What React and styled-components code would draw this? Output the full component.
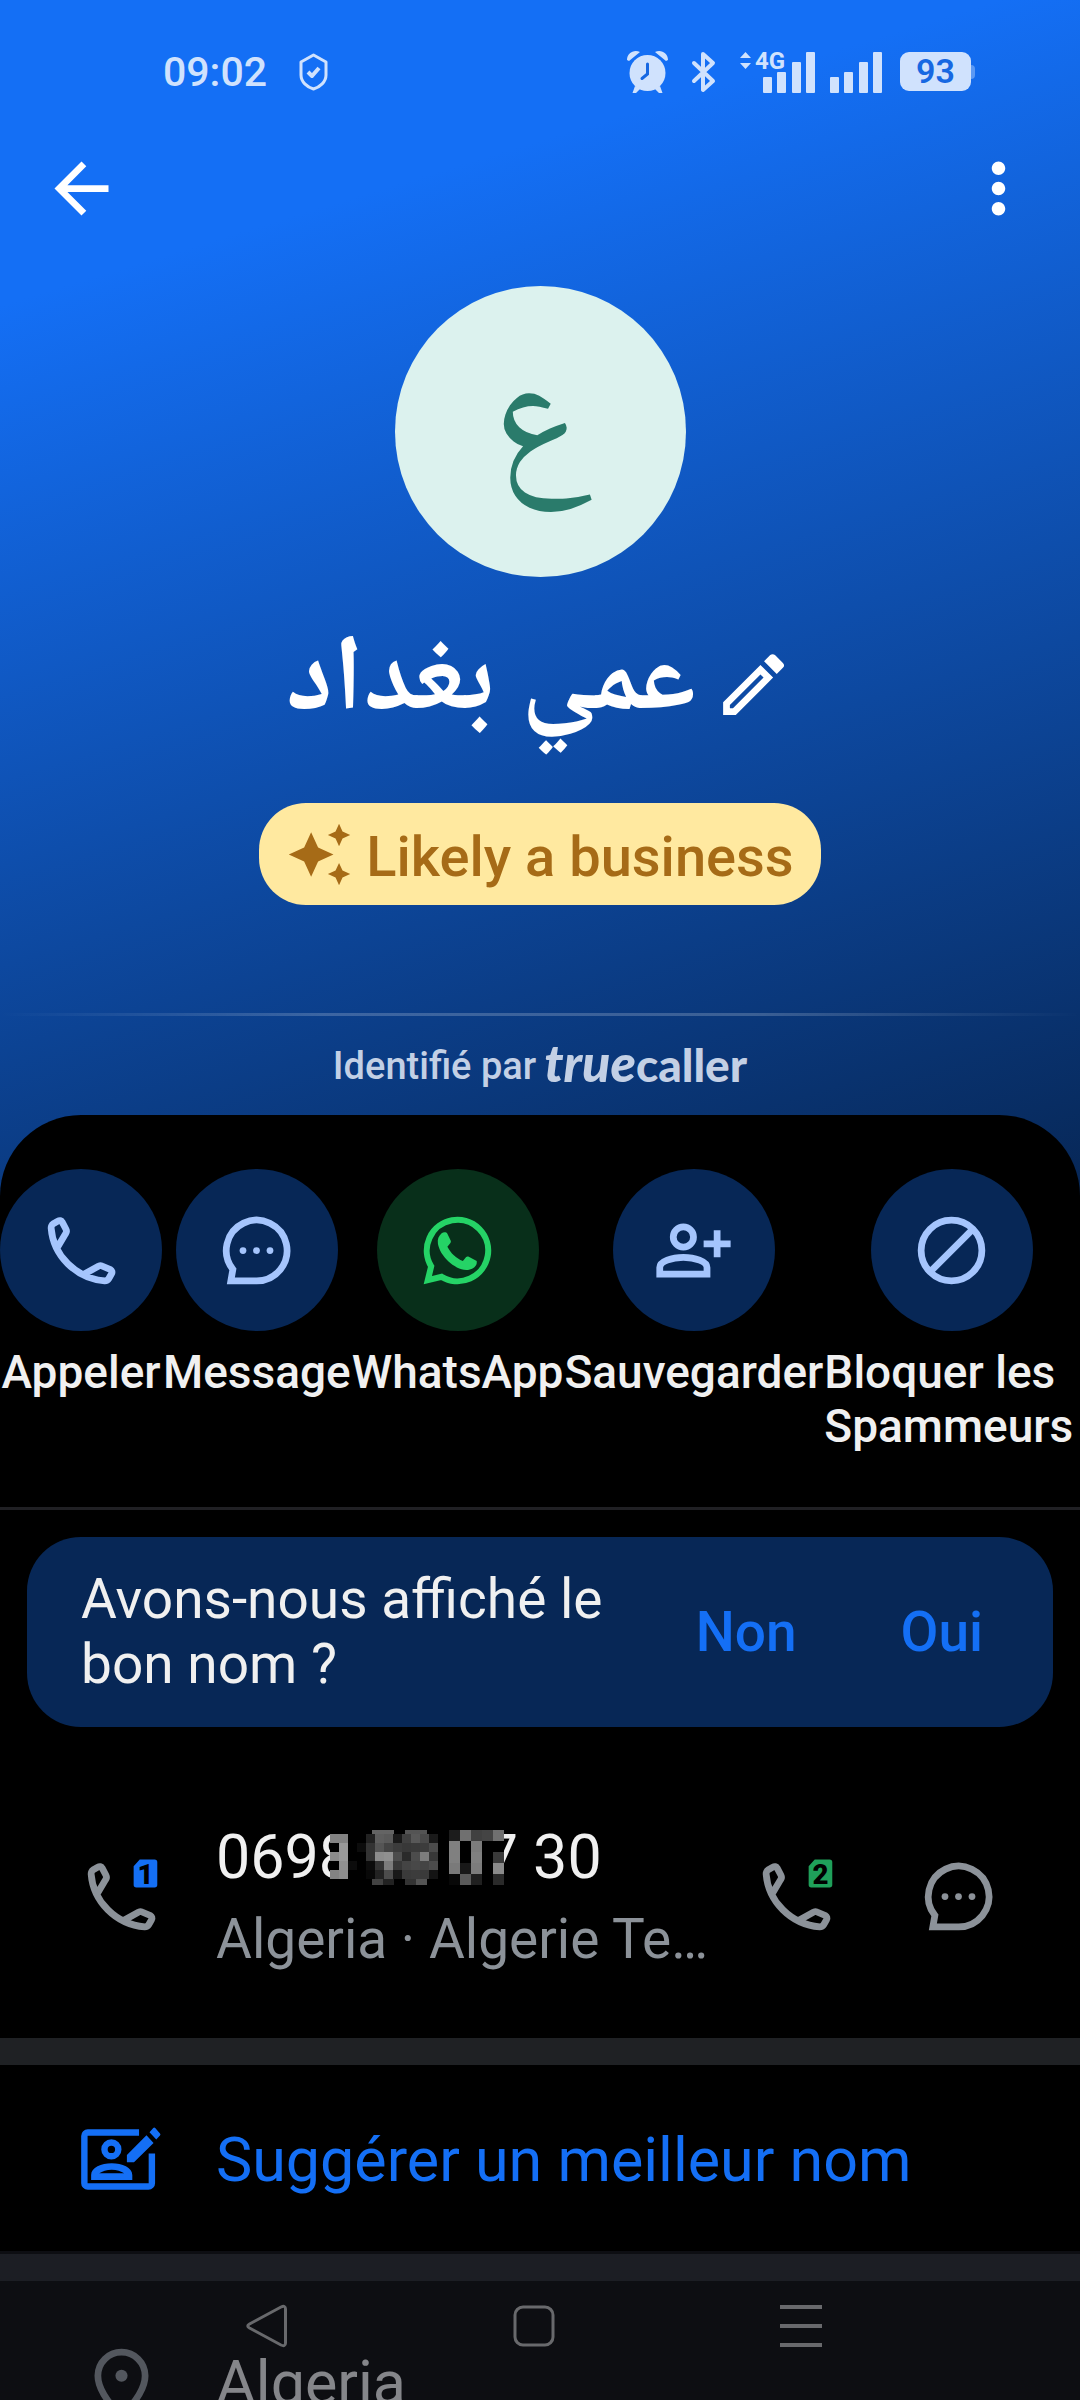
import React from "react"
import styled, { createGlobalStyle } from "styled-components"
import {
  MdArrowBack,
  MdAutoAwesome,
  MdMoreVert,
  MdOutlineEdit,
} from "react-icons/md"

const blue = "#146ff5"
const navy = "#072756"
const lightBlue = "#a5c5fd"
const grey = "#8c9299"
const white = "#f0f0f0"
const status = "#d0e2fd"

const GlobalStyle = createGlobalStyle`
  * {
    box-sizing: border-box;
  }
  body {
    margin: 0;
    background: #000;
    font-family: Roboto, "Noto Naskh Arabic", "Noto Sans Arabic", "DejaVu Sans", sans-serif;
  }
  h1, p {
    margin: 0;
    font-weight: 400;
  }
  button {
    margin: 0;
    padding: 0;
    border: 0;
    background: none;
    color: inherit;
    font: inherit;
    cursor: pointer;
  }
  svg {
    display: block;
    flex-shrink: 0;
    overflow: visible;
  }
`

const Screen = styled.div`
  height: 100vh;
  overflow-y: auto;
  scrollbar-width: none;
  background: #000;
`

const Header = styled.header`
  display: flex;
  flex-direction: column;
  align-items: center;
  padding-bottom: 81px;
  background: linear-gradient(163deg, ${blue} 20%, ${navy} 100%);
  color: #fff;
`

const StatusBar = styled.div`
  align-self: stretch;
  display: flex;
  justify-content: space-between;
  height: 94px;
  padding: 49px 105px 0 163px;
  color: ${status};
`

const StatusGroup = styled.div`
  display: flex;
  align-items: center;
  gap: ${(props) => props.$gap}px;
`

const Time = styled.time`
  font-size: 41px;
  font-weight: 500;
`

const Battery = styled.div`
  display: flex;
  align-items: center;
`

const BatteryBody = styled.span`
  width: 71px;
  height: 39px;
  border-radius: 9px;
  background: ${status};
  color: #1768e2;
  font-size: 34px;
  font-weight: 600;
  line-height: 39px;
  text-align: center;
`

const BatteryTip = styled.span`
  width: 4px;
  height: 14px;
  border-radius: 0 4px 4px 0;
  background: #5b99f4;
`

const Toolbar = styled.nav`
  align-self: stretch;
  display: flex;
  align-items: center;
  justify-content: space-between;
  height: 189px;
  padding: 0 41px;
`

const Avatar = styled.div`
  display: flex;
  align-items: center;
  justify-content: center;
  width: 291px;
  height: 291px;
  margin-top: 3px;
  padding-bottom: 38px;
  border-radius: 50%;
  background: #dcf2ee;
  color: #2a7b6b;
  font-size: 158px;
  line-height: 160px;
`

const NameRow = styled.div`
  display: flex;
  align-items: center;
  gap: 17px;
  height: 100px;
  margin: 57px 0 69px;
`

const Name = styled.h1`
  align-self: flex-start;
  font-size: 108px;
  font-weight: 700;
  line-height: 76px;
  white-space: nowrap;
`

const Badge = styled.div`
  display: flex;
  align-items: center;
  gap: 13px;
  height: 102px;
  padding: 0 27px;
  border-radius: 47px;
  background: #ffe9a0;
  color: #a66b17;
  font-size: 56px;
  font-weight: 500;
`

const BadgeLabel = styled.span`
  padding-top: 6px;
`

const FadeLine = styled.div`
  align-self: stretch;
  height: 3px;
  margin-top: 108px;
  background: linear-gradient(
    90deg,
    transparent,
    rgba(255, 255, 255, 0.2) 30%,
    rgba(255, 255, 255, 0.2) 70%,
    transparent
  );
`

const Identified = styled.p`
  display: flex;
  align-items: center;
  gap: 8px;
  height: 99px;
  color: #c3d0e5;
  font-size: 38px;
  font-weight: 500;
`

const Wordmark = styled.span`
  padding-bottom: 4px;
  font-family: Lato, sans-serif;
  font-size: 46px;
  font-weight: 900;
  line-height: 54px;
  i {
    font-size: 52px;
  }
`

const Sheet = styled.main`
  position: relative;
  margin-top: -81px;
  border-radius: 81px 81px 0 0;
  background: #000;
  color: ${white};
`

const Actions = styled.div`
  display: flex;
  align-items: flex-start;
  padding: 54px 0;
  border-bottom: 3px solid #202024;
`

const Action = styled.button`
  display: flex;
  flex-direction: column;
  align-items: center;
  gap: 14px;
  flex-grow: ${(props) => (props.$grow ? 1 : 0)};
  padding-right: 1px;
  font-size: 46px;
  font-weight: 500;
  line-height: 54px;
  text-align: left;
`

const Circle = styled.span`
  display: flex;
  align-items: center;
  justify-content: center;
  width: 162px;
  height: 162px;
  border-radius: 50%;
  background: ${(props) => (props.$green ? "#082f1a" : navy)};
  color: ${(props) => (props.$green ? "#25d366" : lightBlue)};
`

const ActionLabel = styled.span`
  align-self: ${(props) => (props.$start ? "flex-start" : "center")};
  white-space: pre-line;
`

const Question = styled.section`
  display: flex;
  align-items: center;
  gap: 82px;
  margin: 27px;
  padding: 30px 70px 30px 54px;
  border-radius: 54px;
  background: ${navy};
  font-size: 55px;
  line-height: 65px;
`

const QuestionText = styled.p`
  flex: 1;
`

const Answer = styled.button`
  color: ${blue};
  font-weight: 500;
  & + & {
    margin-left: 22px;
  }
`

const PhoneRow = styled.section`
  display: flex;
  align-items: center;
  padding: 67px 81px;
  color: ${grey};
`

const PhoneText = styled.div`
  flex: 1;
  min-width: 0;
  margin: 0 46px 0 54px;
`

const PhoneNumber = styled.p`
  position: relative;
  color: ${white};
  font-size: 61px;
  line-height: 72px;
  white-space: nowrap;
`

const HiddenDigits = styled.span`
  display: inline-block;
  width: 66px;
`

const MosaicSvg = styled.svg`
  position: absolute;
  left: 114px;
  top: 9px;
`

const Carrier = styled.p`
  margin-top: 14px;
  overflow: hidden;
  font-size: 55px;
  line-height: 64px;
  text-overflow: ellipsis;
  white-space: nowrap;
`

const RowButtons = styled.div`
  display: flex;
  gap: 81px;
`

const Band = styled.div`
  height: 27px;
  background: #1f2124;
`

const SuggestRow = styled.button`
  display: flex;
  align-items: center;
  gap: 54px;
  width: 100%;
  height: 189px;
  padding: 0 81px;
  color: ${blue};
  font-size: 61px;
  line-height: 72px;
  text-align: left;
`

const PlaceRow = styled.section`
  display: flex;
  align-items: center;
  gap: 54px;
  padding: 61px 81px 160px;
  font-size: 61px;
  line-height: 72px;
  svg {
    color: ${grey};
  }
`

const NavBar = styled.nav`
  position: fixed;
  left: 0;
  right: 0;
  bottom: 0;
  display: flex;
  align-items: center;
  justify-content: center;
  gap: 189px;
  height: 149px;
  padding-right: 12px;
  background: rgba(26, 28, 36, 0.5);
  color: #68696c;
`

const NavButton = styled.button`
  padding: 18px;
`

const Icon = ({ children, width = 2 }) => (
  <svg
    width="81"
    height="81"
    viewBox="0 0 24 24"
    fill="none"
    stroke="currentColor"
    strokeWidth={width}
  >
    {children}
  </svg>
)

const PhoneIcon = ({ sim, simColor }) => (
  <Icon>
    <path d="M12.6 19.1 16.9 16.7C17.3 16.4 17.7 16.4 18.1 16.6L20.5 17.6C21 17.9 21.2 18.4 20.9 18.9L20.1 20.3C19.8 20.8 19.4 21 18.9 21C10.3 20.3 3.6 13.4 3 5.3C3 4.8 3.2 4.4 3.6 4.1L5 3.3C5.5 3 6 3.1 6.3 3.6L7.4 5.7C7.6 6.1 7.6 6.6 7.3 7L4.8 11.2" />
    {sim && (
      <g stroke="none">
        <path
          fill={simColor}
          d="M17.4 1H21.8a.8.8 0 0 1 .8.8v6.7a.8.8 0 0 1-.8.8h-5.4a.8.8 0 0 1-.8-.8V3z"
        />
        <text
          x="19.1"
          y="8.2"
          fill="#000"
          fontSize="8.2"
          fontWeight="900"
          textAnchor="middle"
        >
          {sim}
        </text>
      </g>
    )}
  </Icon>
)

const ChatIcon = () => (
  <Icon>
    <path d="M12 21H4.4L5 17.6A9 9 0 1 1 12 21Z" />
    <g fill="currentColor" stroke="none">
      <circle cx="8" cy="12" r="1" />
      <circle cx="12" cy="12" r="1" />
      <circle cx="16" cy="12" r="1" />
    </g>
  </Icon>
)

const WhatsAppIcon = () => (
  <Icon width={1.8}>
    <path d="M4.2 16.7A9.1 9.1 0 1 1 7.3 19.8L3.2 20.8Z" />
    <path
      fill="currentColor"
      stroke="none"
      d="M7.3 6.9C6.4 7.7 6 8.7 6.2 10C6.8 13.6 11 17.6 14.6 17.8C16 17.8 17.5 17 17.7 15.8V15.1L15.2 13.8C14.9 13.7 14.7 13.8 14.5 14L13.6 15.1C11.6 14.4 10 12.8 9 10.9L9.9 9.8C10 9.6 10.1 9.4 10 9.1L9 7C8.7 6.5 7.8 6.5 7.3 6.9Z"
    />
  </Icon>
)

const SaveIcon = () => (
  <Icon>
    <circle cx="9" cy="8" r="3" />
    <path d="M2 19V17C2 15.2 5.6 14 9 14S16 15.2 16 17V19ZM19 6V14M15 10H23" />
  </Icon>
)

const BlockIcon = () => (
  <Icon>
    <circle cx="12" cy="12" r="9" />
    <path d="M18.4 5.6 5.6 18.4" />
  </Icon>
)

const SuggestIcon = () => (
  <Icon width={1.9}>
    <path d="M17.2 4H2A1 1 0 0 0 1 5V19A1 1 0 0 0 2 20H20A1 1 0 0 0 21 19V10.2" />
    <circle cx="9" cy="9" r="2.05" />
    <g fill="currentColor" stroke="none">
      <path d="M3 18.1V16.6C3 14.3 6 13.1 9.1 13.1S15.2 14.3 15.2 16.6V18.1ZM5.4 16.1H12.8C11.9 15.4 10.6 15 9.1 15S6.3 15.4 5.4 16.1Z" />
      <path d="M19.4 4.8 21.5 7.1 15.7 12.8H13.6V10.7ZM20.3 3.9 21.4 2.7Q21.7 2.4 22 2.7L23.4 4.3Q23.7 4.6 23.4 4.9L22.3 6.1Z" />
    </g>
  </Icon>
)

const PinIcon = () => (
  <Icon>
    <path d="M12 22C9 19 5 14.500 5 10a7 7 0 0 1 14 0c0 4.500-4 9-7 12z" />
    <circle cx="12" cy="10" r="1.8" fill="currentColor" stroke="none" />
  </Icon>
)

const ShieldIcon = () => (
  <svg
    width="29"
    height="38"
    viewBox="0 0 29 38"
    fill="none"
    stroke="currentColor"
    strokeWidth="3"
    strokeLinejoin="round"
  >
    <path d="M14.500 2 27 9V22C27 29 21 34 14.500 36C8 34 2 29 2 22V9Z" />
    <path d="M9 19 13 23 20 15" strokeWidth="4" />
  </svg>
)

const AlarmIcon = () => (
  <svg width="41" height="43" viewBox="0 0 41 43" fill="currentColor">
    <circle cx="20.500" cy="23" r="18" />
    <path d="M0 10C0 3 7 -1 13 2L2 11ZM41 10C41 3 34 -1 28 2L39 11Z" />
    <path d="M8 36 5.500 43H9L14 38ZM33 36 35.500 43H32L27 38Z" />
    <path
      d="M20.500 14V24L15 28.500"
      fill="none"
      stroke="#1768e2"
      strokeWidth="3"
      strokeLinecap="round"
    />
  </svg>
)

const BluetoothIcon = () => (
  <svg
    width="24"
    height="42"
    viewBox="0 0 24 42"
    fill="none"
    stroke="currentColor"
    strokeWidth="4"
    strokeLinecap="round"
    strokeLinejoin="round"
  >
    <path d="M2 12 21 30 11 39V3L21 12 2 30" />
  </svg>
)

const SignalBars = ({ x = 0 }) => (
  <g>
    <rect x={x} y="26" width="9" height="16" rx="1" />
    <rect x={x + 14} y="21" width="9" height="21" rx="1" />
    <rect x={x + 29} y="11" width="9" height="31" rx="1" />
    <rect x={x + 43} y="1" width="9" height="41" rx="1" />
  </g>
)

// 9px cells on the left, 11px cells on the right; each value is a grey level
const smallCells = [
  [131, 131, 0, 0, 34, 94, 90, 26, 64, 88, 74, 26],
  [0, 153, 0, 12, 51, 85, 68, 60, 56, 58, 60, 76],
  [140, 153, 0, 0, 51, 140, 144, 76, 42, 76, 124, 56],
  [0, 144, 12, 0, 12, 51, 124, 56, 68, 72, 68, 76],
  [131, 140, 0, 0, 8, 34, 76, 24, 58, 60, 58, 20],
]

const largeCells = [
  [28, 112, 64, 68, 112],
  [128, 0, 124, 0, 0],
  [128, 0, 128, 0, 58],
  [122, 24, 124, 0, 138],
  [8, 90, 32, 0, 42],
]

const Mosaic = () => {
  const cell = (x, y, w, h, v) => (
    <rect
      key={`${x}-${y}`}
      x={x}
      y={y}
      width={w}
      height={h}
      fill={`rgb(${v}, ${v}, ${v})`}
    />
  )
  return (
    <MosaicSvg width="174" height="55" shapeRendering="crispEdges" aria-hidden>
      <rect width="174" height="55" fill="#000" />
      {cell(42, 0, 22, 4, 100)}
      {cell(75, 0, 22, 4, 84)}
      {smallCells.map((row, j) =>
        row.map((v, i) => cell(i * 9, 4 + j * 9, 9, 9, v))
      )}
      {cell(42, 49, 11, 6, 66)}
      {cell(53, 49, 11, 6, 34)}
      {cell(75, 49, 11, 6, 51)}
      {cell(86, 49, 11, 6, 84)}
      {largeCells.map((row, j) =>
        row.map((v, i) => cell(119 + i * 11, j * 11, 11, 11, v))
      )}
    </MosaicSvg>
  )
}

const actions = [
  { label: "Appeler", icon: <PhoneIcon /> },
  { label: "Message", icon: <ChatIcon /> },
  { label: "WhatsApp", icon: <WhatsAppIcon />, green: true },
  { label: "Sauvegarder", icon: <SaveIcon /> },
  { label: "Bloquer les\nSpammeurs", icon: <BlockIcon />, last: true },
]

const App = () => {
  return (
    <Screen>
      <GlobalStyle />
      <Header>
        <StatusBar>
          <StatusGroup $gap={32}>
            <Time>09:02</Time>
            <ShieldIcon />
          </StatusGroup>
          <StatusGroup $gap={18}>
            <StatusGroup $gap={24}>
              <AlarmIcon />
              <BluetoothIcon />
              <svg
                width="142"
                height="42"
                viewBox="0 0 142 42"
                fill="currentColor"
              >
                <path d="M0 7 5.500 1 11 7ZM0 12 5.500 18 11 12Z" />
                <text x="15" y="18" fontSize="24" fontWeight="700">
                  4G
                </text>
                <SignalBars x={23} />
                <SignalBars x={90} />
              </svg>
            </StatusGroup>
            <Battery>
              <BatteryBody>93</BatteryBody>
              <BatteryTip />
            </Battery>
          </StatusGroup>
        </StatusBar>
        <Toolbar>
          <button aria-label="Retour">
            <MdArrowBack size={81} />
          </button>
          <button aria-label="Plus d'options">
            <MdMoreVert size={81} />
          </button>
        </Toolbar>
        <Avatar lang="ar">ع</Avatar>
        <NameRow>
          <Name lang="ar" dir="rtl">
            عمي بغداد
          </Name>
          <button aria-label="Modifier le nom">
            <MdOutlineEdit size={81} />
          </button>
        </NameRow>
        <Badge>
          <MdAutoAwesome size={67} />
          <BadgeLabel>Likely a business</BadgeLabel>
        </Badge>
        <FadeLine />
        <Identified>
          Identifié par
          <Wordmark>
            <i>true</i>caller
          </Wordmark>
        </Identified>
      </Header>
      <Sheet>
        <Actions>
          {actions.map((action) => (
            <Action key={action.label} $grow={action.last}>
              <Circle $green={action.green}>{action.icon}</Circle>
              <ActionLabel $start={action.last}>{action.label}</ActionLabel>
            </Action>
          ))}
        </Actions>
        <Question>
          <QuestionText>Avons-nous affiché le bon nom ?</QuestionText>
          <Answer>Non</Answer>
          <Answer>Oui</Answer>
        </Question>
        <PhoneRow>
          <button aria-label="Appeler avec la SIM 1">
            <PhoneIcon sim="1" simColor={blue} />
          </button>
          <PhoneText>
            <PhoneNumber>
              0698 <HiddenDigits /> 07 30
              <Mosaic />
            </PhoneNumber>
            <Carrier>Algeria · Algerie Telecom Mobile</Carrier>
          </PhoneText>
          <RowButtons>
            <button aria-label="Appeler avec la SIM 2">
              <PhoneIcon sim="2" simColor="#1fa05a" />
            </button>
            <button aria-label="Envoyer un message">
              <ChatIcon />
            </button>
          </RowButtons>
        </PhoneRow>
        <Band />
        <SuggestRow>
          <SuggestIcon />
          Suggérer un meilleur nom
        </SuggestRow>
        <Band />
        <PlaceRow>
          <PinIcon />
          <p>Algeria</p>
        </PlaceRow>
      </Sheet>
      <NavBar>
        <NavButton aria-label="Précédent">
          <svg width="42" height="42" viewBox="0 0 42 42" fill="none" stroke="currentColor" strokeWidth="3">
            <path d="M3.500 19 35 2Q39.500 0 39.500 4V38Q39.500 42 35 40L3.500 23Q0 21 3.500 19Z" />
          </svg>
        </NavButton>
        <NavButton aria-label="Accueil">
          <svg width="42" height="42" viewBox="0 0 42 42" fill="none" stroke="currentColor" strokeWidth="3">
            <rect x="2" y="2" width="38" height="38" rx="8" />
          </svg>
        </NavButton>
        <NavButton aria-label="Applications récentes">
          <svg width="42" height="42" viewBox="0 0 42 42" stroke="currentColor" strokeWidth="4">
            <path d="M0 2H42M0 21H42M0 40H42" />
          </svg>
        </NavButton>
      </NavBar>
    </Screen>
  )
}

export default App
